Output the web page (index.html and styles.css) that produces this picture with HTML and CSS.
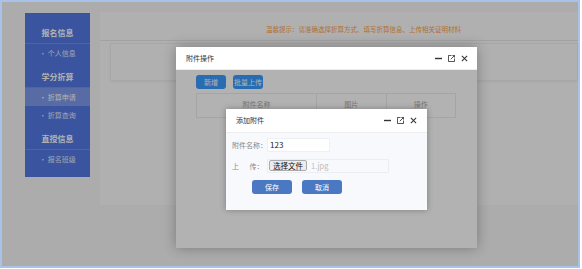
FILE: index.html
```html
<!DOCTYPE html>
<html lang="zh-CN">
<head>
    <meta charset="UTF-8">
    <meta name="viewport" content="width=device-width, initial-scale=1.0">
    <title>学分折算</title>
    <link rel="stylesheet" href="styles.css">
</head>
<body>
    <div class="frame">
        <div class="page">
            <aside class="side">
                <div class="side-title">报名信息</div>
                <a class="side-item">· 个人信息</a>
                <div class="side-title">学分折算</div>
                <a class="side-item active">· 折算申请</a>
                <a class="side-item">· 折算查询</a>
                <div class="side-title">直授信息</div>
                <a class="side-item">· 报名班级</a>
            </aside>
            <main class="main">
                <div class="tip">温馨提示：请准确选择折算方式、填写折算信息、上传相关证明材料</div>
                <div class="card"></div>
            </main>
        </div>

        <!-- outer layer: 附件操作 -->
        <div class="mask">
            <div class="layer">
                <div class="layer-head">
                    <span>附件操作</span>
                    <span class="tools">
                        <svg viewBox="0 0 8 8"><path d="M0 4h8" stroke-width="1.6"/></svg>
                        <svg viewBox="0 0 8 8"><path d="M4 .5H.5v7h7V4M3.2 4.8L7.5 .5M5 .5h2.5V3"/></svg>
                        <svg viewBox="0 0 8 8"><path d="M1 1l6 6M7 1L1 7" stroke-width="1.2"/></svg>
                    </span>
                </div>
                <div class="layer-body">
                    <div class="toolbar">
                        <button class="btn">新增</button>
                        <button class="btn">批量上传</button>
                    </div>
                    <table class="grid">
                        <tr>
                            <th class="col-name">附件名称</th>
                            <th>图片</th>
                            <th>操作</th>
                        </tr>
                    </table>

                    <!-- inner layer: 添加附件 -->
                    <div class="shade">
                        <div class="pop">
                            <div class="pop-head">
                                <span>添加附件</span>
                                <span class="tools">
                                    <svg viewBox="0 0 8 8"><path d="M0 4h8" stroke-width="1.6"/></svg>
                                    <svg viewBox="0 0 8 8"><path d="M4 .5H.5v7h7V4M3.2 4.8L7.5 .5M5 .5h2.5V3"/></svg>
                                    <svg viewBox="0 0 8 8"><path d="M1 1l6 6M7 1L1 7" stroke-width="1.2"/></svg>
                                </span>
                            </div>
                            <div class="pop-body">
                                <div class="row">
                                    <label>附件名称：</label>
                                    <div class="field">123</div>
                                </div>
                                <div class="row">
                                    <label>上&emsp;&ensp;传：</label>
                                    <div class="file">
                                        <span class="file-btn">选择文件</span>
                                        <span class="file-name">1.jpg</span>
                                    </div>
                                </div>
                                <div class="actions">
                                    <button class="btn-save">保存</button>
                                    <button class="btn-save">取消</button>
                                </div>
                            </div>
                        </div>
                    </div>
                </div>
            </div>
        </div>
    </div>
</body>
</html>
```

FILE: styles.css
```css
body {
    margin: 0;
    font-family: "Noto Sans CJK SC", "Noto Sans", sans-serif;
    background: #fff;
}
.frame {
    position: relative;
    width: 580px;
    height: 268px;
    box-sizing: border-box;
    border: 2px solid #a9c2e8;
    background: #f7f7f7;
    overflow: hidden;
}
.page {
    display: flex;
    align-items: flex-start;
    padding: 10px 0 0 23px;
}
.side {
    width: 65px;
    margin-top: 1px;
    padding: 10px 0 9px;
    background: #5479e6;
}
.side-title {
    line-height: 20px;
    text-align: center;
    color: #fff;
    font-size: 8px;
    font-weight: bold;
    border-bottom: 1px solid rgba(255, 255, 255, 0.18);
}
.side-item + .side-title {
    margin-top: 5px;
}
.side-item {
    display: block;
    line-height: 18px;
    text-align: center;
    color: #e6ebfa;
    font-size: 7px;
}
.side-item.active {
    background: rgba(255, 255, 255, 0.25);
    color: #fff;
}
.main {
    flex: 1;
    margin-left: 10px;
    height: 193px;
    background: #fdfdfd;
}
.tip {
    height: 16px;
    padding: 12px 0 0 166px;
    line-height: 10px;
    font-size: 6.5px;
    color: #ff9f45;
    border-bottom: 1px solid #e8e8e8;
}
.card {
    margin: 2px 0 0 10px;
    height: 36px;
    border: 1px solid #efefef;
    box-shadow: 0 1px 3px rgba(0, 0, 0, 0.06);
}

/* layers */
.mask {
    position: absolute;
    top: 0;
    left: 0;
    right: 0;
    bottom: 0;
    background: rgba(0, 0, 0, 0.3);
}
.layer {
    position: absolute;
    left: 174px;
    top: 45px;
    width: 301px;
    height: 201px;
    background: #fff;
    box-shadow: 0 0 12px rgba(0, 0, 0, 0.3);
}
.layer-head,
.pop-head {
    display: flex;
    justify-content: space-between;
    align-items: center;
    height: 22px;
    padding: 0 9px 0 10px;
    background: #fff;
    border-bottom: 1px solid #eee;
    font-size: 7px;
    color: #333;
}
.tools {
    display: flex;
    gap: 6px;
}
.tools svg {
    width: 7px;
    height: 7px;
    fill: none;
    stroke: #333;
    stroke-width: 1;
}
.layer-body {
    position: relative;
    height: 168px;
    padding: 5px 20px;
}
.toolbar {
    display: flex;
    gap: 7px;
}
.btn {
    width: 30px;
    height: 14px;
    padding: 0;
    border: none;
    border-radius: 3px;
    background: #3a9cff;
    color: #fff;
    font-family: inherit;
    font-size: 7px;
}
.grid {
    width: 260px;
    margin-top: 4px;
    border-collapse: collapse;
}
.grid th {
    height: 18px;
    padding: 1px 0 4px;
    border: 1px solid #ececec;
    font-weight: normal;
    font-size: 7px;
    color: #aaa;
}
.grid .col-name {
    width: 119px;
}
.shade {
    position: absolute;
    top: 0;
    left: 0;
    right: 0;
    bottom: 0;
    display: flex;
    align-items: center;
    justify-content: center;
    background: rgba(0, 0, 0, 0.3);
}
.pop {
    width: 201px;
    height: 101px;
    background: #f7f9fc;
    box-shadow: 0 0 6px rgba(0, 0, 0, 0.3);
}
.pop-head {
    height: 23px;
    padding-right: 10px;
}
.pop-body {
    padding: 5px 0 0 6px;
}
.row {
    display: flex;
    align-items: center;
    height: 14px;
    margin-bottom: 7px;
    font-size: 7px;
    color: #888;
}
.row label {
    width: 35px;
    white-space: nowrap;
}
.field {
    width: 59px;
    height: 12px;
    padding-left: 2px;
    line-height: 12px;
    background: #fff;
    border: 1px solid #eef0f3;
    color: #222;
    font-size: 8px;
}
.file {
    display: flex;
    align-items: center;
    gap: 4px;
    width: 119px;
    height: 12px;
    padding-left: 1px;
    border: 1px solid #eceef2;
    background: #f7f9fc;
}
.file-btn {
    height: 9px;
    padding: 0 3px;
    line-height: 9px;
    background: #ececec;
    border: 1px solid #aaa;
    border-radius: 2px;
    color: #111;
    font-size: 7.5px;
}
.file-name {
    color: #bbb;
    font-size: 7.5px;
}
.actions {
    display: flex;
    gap: 10px;
    padding-left: 20px;
}
.btn-save {
    width: 40px;
    height: 14px;
    padding: 0;
    border: none;
    border-radius: 3px;
    background: #4b78c2;
    color: #fff;
    font-family: inherit;
    font-size: 7px;
}
```
